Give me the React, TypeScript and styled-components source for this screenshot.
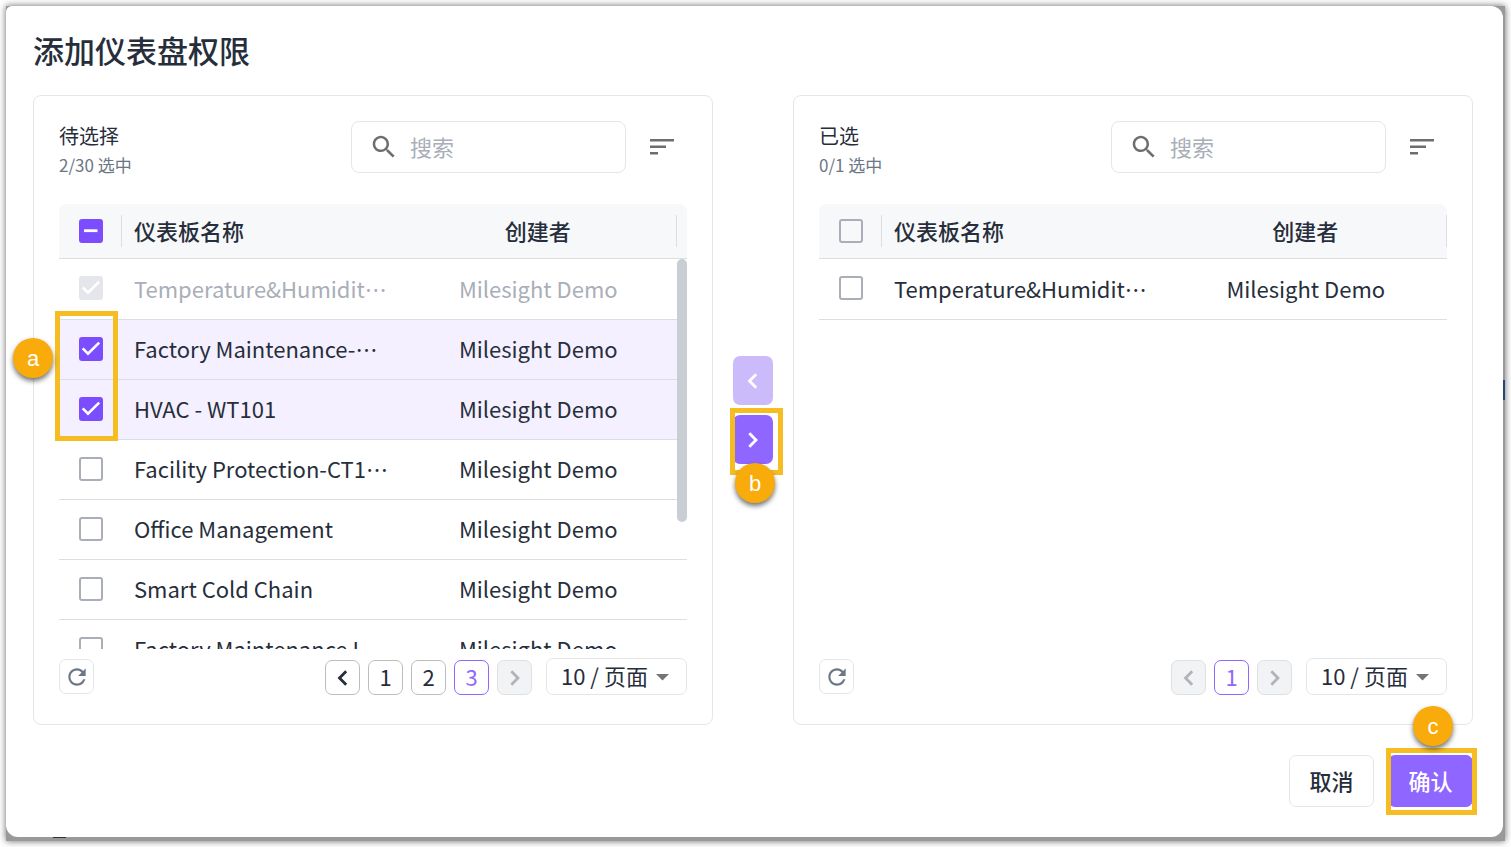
import React, { useEffect, useRef, useState } from 'react';
import styled, { createGlobalStyle } from 'styled-components';

const GlobalStyle = createGlobalStyle`
  *, *::before, *::after { box-sizing: border-box; }
  body {
    margin: 0;
    background: #fff;
    color: #272e3b;
    font-family: 'Noto Sans CJK SC', 'Noto Sans', sans-serif;
    font-size: 22px;
  }
  button, input, select { font: inherit; color: inherit; margin: 0; }
  button { cursor: pointer; padding: 0; }
  button:disabled { cursor: default; }
`;

const Page = styled.div`
  min-height: 100vh;
  padding: 6px;
  display: flex;
  flex-direction: column;
`;

const Backdrop = styled.div`
  flex: 1;
  display: flex;
  flex-direction: column;
  padding: 0 2px 4px 0;
  background:
    linear-gradient(#24467c, #24467c) no-repeat right 374px / 2px 20px,
    linear-gradient(#2c3340, #2c3340) no-repeat 47px calc(100% - 3px) / 13px 1px,
    #999;
  box-shadow: 0 0 7px rgba(0, 0, 0, 0.6);
`;

const Dialog = styled.main`
  flex: 1;
  display: flex;
  flex-direction: column;
  padding: 22px 30px 30px 27px;
  background: #fff;
  border-radius: 6px 12px 12px 12px;
`;

const Title = styled.h1`
  margin: 0 0 24px;
  font-size: 31px;
  line-height: 43px;
  font-weight: 500;
`;

const Transfer = styled.div`
  flex: 1;
  display: flex;
`;

const Panel = styled.section`
  flex: 1;
  min-width: 0;
  display: flex;
  flex-direction: column;
  padding: 25px 25px 29px;
  border: 1px solid #e5e6eb;
  border-radius: 8px;
`;

const PanelHead = styled.header`
  display: flex;
  align-items: flex-start;
  height: 52px;
  margin-bottom: 31px;
`;

const PanelInfo = styled.div`
  flex: 1;
`;

const PanelName = styled.h2`
  margin: 0;
  font-size: 20px;
  line-height: 30px;
  font-weight: 400;
`;

const PanelCount = styled.p`
  margin: 0;
  font-size: 17px;
  line-height: 28px;
  color: #6b7785;
`;

const SearchBox = styled.label`
  display: flex;
  align-items: center;
  gap: 11px;
  width: 275px;
  height: 52px;
  padding: 0 16px 0 17px;
  border: 1px solid #e5e6eb;
  border-radius: 8px;
  color: #6e6e6e;
`;

const SearchInput = styled.input`
  flex: 1;
  min-width: 0;
  border: 0;
  padding: 0 0 2px;
  outline: 0;
  background: none;
  &::placeholder { color: #a9aeb8; opacity: 1; }
`;

const SortButton = styled.button`
  width: 51px;
  height: 52px;
  margin-left: 10px;
  display: grid;
  place-items: center;
  border: 0;
  background: none;
  color: #6e6e6e;
`;

const TableArea = styled.div`
  position: relative;
  height: 445px;
`;

const TableClip = styled.div`
  height: 100%;
  overflow: hidden;
`;

const Table = styled.table`
  width: 100%;
  table-layout: fixed;
  border-collapse: separate;
  border-spacing: 0;
`;

const HeadCell = styled.th`
  height: 55px;
  padding: 0;
  background: #f7f8fa;
  border-bottom: 1px solid #dcdee0;
  font-weight: 500;
  &:first-child { border-top-left-radius: 8px; }
  &:last-child { border-top-right-radius: 8px; }
`;

const HeadInner = styled.div<{ $divider?: boolean; $center?: boolean }>`
  display: flex;
  align-items: center;
  justify-content: ${p => (p.$center ? 'center' : 'flex-start')};
  height: 32px;
  padding: 0 0 2px ${p => (p.$center ? 0 : 12)}px;
  border-right: ${p => (p.$divider ? '1px solid #dcdee0' : '0')};
`;

const CheckHead = styled(HeadInner)`
  padding: 0 0 0 20px;
`;

const Cell = styled.td<{ $center?: boolean }>`
  height: 60px;
  padding: 0 0 4px ${p => (p.$center ? 0 : 12)}px;
  border-bottom: 1px solid #dcdee0;
  text-align: ${p => (p.$center ? 'center' : 'left')};
  white-space: nowrap;
`;

const CheckCell = styled(Cell)`
  padding: 0 0 2px 20px;
`;

const Row = styled.tr<{ $selected?: boolean; $disabled?: boolean }>`
  color: ${p => (p.$disabled ? '#a9aeb8' : '#272e3b')};
  background: ${p => (p.$selected ? '#f4f0ff' : '#fff')};
  &:first-child > td { height: 61px; padding-bottom: 2px; }
`;

const ScrollThumb = styled.div`
  position: absolute;
  top: 55px;
  right: 0;
  width: 10px;
  height: 263px;
  border-radius: 5px;
  background: #c9cdd4;
`;

const CheckWrap = styled.span`
  display: grid;
  width: 24px;
  height: 24px;
  > * { grid-area: 1 / 1; }
  > svg { pointer-events: none; }
`;

const CheckInput = styled.input`
  appearance: none;
  width: 24px;
  height: 24px;
  border: 2px solid #a9aeb8;
  border-radius: 3px;
  background: transparent;
  &:checked, &:indeterminate { border-color: #7b4dff; background: #7b4dff; }
  &:disabled { border-color: #e5e6eb; background: #e5e6eb; }
`;

const PanelFoot = styled.footer`
  display: flex;
  align-items: center;
  margin-top: 9px;
  height: 37px;
`;

const SquareButton = styled.button<{ $active?: boolean }>`
  width: 35px;
  height: 35px;
  display: grid;
  place-items: center;
  line-height: 31px;
  padding-bottom: 2px;
  border: 1px solid ${p => (p.$active ? '#8f66ff' : '#bdbdbd')};
  border-radius: 7px;
  background: #fff;
  color: ${p => (p.$active ? '#8f66ff' : '#272e3b')};
  > svg { margin-top: 2px; }
  &:disabled { background: #f2f3f5; border-color: #dfe0e3; color: #b1b3b8; }
`;

const RefreshButton = styled(SquareButton)`
  margin-right: auto;
  border-color: #e5e6eb;
  color: #6b7785;
`;

const Pager = styled.nav`
  display: flex;
  gap: 8px;
  align-self: flex-end;
`;

const SizeBox = styled.div`
  display: grid;
  align-items: center;
  width: 141px;
  height: 37px;
  margin-left: 14px;
  > * { grid-area: 1 / 1; }
  > svg { justify-self: end; margin-right: 17px; pointer-events: none; }
`;

const SizeSelect = styled.select`
  appearance: none;
  width: 100%;
  height: 100%;
  padding: 0 0 3px 14px;
  border: 1px solid #e5e6eb;
  border-radius: 7px;
  background: #fff;
`;

const MoveColumn = styled.div`
  display: flex;
  flex-direction: column;
  justify-content: center;
  gap: 10px;
  padding: 0 20px;
`;

const Anchor = styled.div`
  position: relative;
`;

const MoveButton = styled.button`
  display: grid;
  place-items: center;
  width: 40px;
  height: 49px;
  border: 0;
  border-radius: 7px;
  background: #8f66ff;
  color: #fff;
  &:disabled { background: #cbbbfb; }
`;

const Actions = styled.div`
  display: flex;
  justify-content: flex-end;
  gap: 14px;
  margin-top: 30px;
`;

const ActionButton = styled.button<{ $primary?: boolean }>`
  width: 85px;
  height: 52px;
  padding-bottom: 2px;
  border: 1px solid ${p => (p.$primary ? '#8f66ff' : '#e5e6eb')};
  border-radius: 7px;
  background: ${p => (p.$primary ? '#8f66ff' : '#fff')};
  color: ${p => (p.$primary ? '#fff' : '#272e3b')};
  font-weight: 500;
`;

const Highlight = styled.div<{ $x: number; $y: number; $w: number; $h: number }>`
  position: absolute;
  left: ${p => p.$x}px;
  top: ${p => p.$y}px;
  width: ${p => p.$w}px;
  height: ${p => p.$h}px;
  border: 5px solid #f5bd22;
  pointer-events: none;
`;

const Badge = styled.div<{ $x: number; $y: number }>`
  position: absolute;
  left: ${p => p.$x}px;
  top: ${p => p.$y}px;
  width: 40px;
  height: 40px;
  border-radius: 50%;
  background: #f8ab0a;
  box-shadow: 0 3px 5px rgba(0, 0, 0, 0.55);
  color: #fff;
  font-family: 'Liberation Sans', Arial, sans-serif;
  font-size: 22px;
  line-height: 41px;
  text-align: center;
`;

function SearchIcon() {
  return (
    <svg width="30" height="30" viewBox="0 0 24 24" fill="currentColor" aria-hidden="true">
      <path d="M15.5 14h-.79l-.28-.27C15.41 12.59 16 11.11 16 9.5 16 5.91 13.09 3 9.5 3S3 5.91 3 9.5 5.91 16 9.5 16c1.61 0 3.09-.59 4.23-1.57l.27.28v.79l5 4.99L20.49 19l-4.99-5zm-6 0C7.01 14 5 11.99 5 9.5S7.01 5 9.5 5 14 7.01 14 9.5 11.99 14 9.5 14z" />
    </svg>
  );
}

function SortIcon() {
  return (
    <svg width="24" height="18" viewBox="0 0 24 18" fill="currentColor" aria-hidden="true">
      <path d="M0 1h24v2.6H0zM0 7.5h16v2.6H0zM0 14h8v2.6H0z" />
    </svg>
  );
}

function RefreshIcon() {
  return (
    <svg width="26" height="26" viewBox="0 0 24 24" fill="currentColor" aria-hidden="true">
      <path d="M17.65 6.35C16.2 4.9 14.21 4 12 4c-4.42 0-7.99 3.58-7.99 8s3.57 8 7.99 8c3.73 0 6.84-2.55 7.73-6h-2.08c-.82 2.33-3.04 4-5.65 4-3.31 0-6-2.69-6-6s2.69-6 6-6c1.66 0 3.14.69 4.22 1.78L13 11h7V4l-2.35 2.35z" />
    </svg>
  );
}

function Chevron({ dir }: { dir: 'left' | 'right' }) {
  return (
    <svg width="16" height="18" viewBox="0 0 16 18" fill="none" stroke="currentColor" strokeWidth="2.8" aria-hidden="true">
      <path d={dir === 'left' ? 'M11.2 2.2 4.5 9l6.7 6.8' : 'M4.3 2.2 11 9l-6.7 6.8'} />
    </svg>
  );
}

function Check(props: { label: string; checked?: boolean; partial?: boolean; disabled?: boolean }) {
  const [on, setOn] = useState(!!props.checked);
  const [partial, setPartial] = useState(!!props.partial);
  const ref = useRef<HTMLInputElement>(null);
  useEffect(() => {
    if (ref.current) ref.current.indeterminate = partial;
  }, [partial]);
  return (
    <CheckWrap>
      <CheckInput
        ref={ref}
        type="checkbox"
        aria-label={props.label}
        checked={on}
        disabled={props.disabled}
        onChange={e => {
          setPartial(false);
          setOn(e.target.checked);
        }}
      />
      {(on || partial) && (
        <svg width="24" height="24" viewBox="0 0 24 24" fill="none" stroke="#fff" aria-hidden="true">
          {partial ? <path d="M5 11.7h13.5" strokeWidth="2.8" /> : <path d="M3.7 11.3 9 16.6 20.2 5.6" strokeWidth="2.6" />}
        </svg>
      )}
    </CheckWrap>
  );
}

interface Item {
  name: string;
  checked?: boolean;
  disabled?: boolean;
}

interface PanelProps {
  title: string;
  count: string;
  items: Item[];
  pages: number[];
  current: number;
  partial?: boolean;
  scroll?: boolean;
  children?: React.ReactNode;
}

function ListPanel({ title, count, items, pages, current, partial, scroll, children }: PanelProps) {
  return (
    <Panel>
      <PanelHead>
        <PanelInfo>
          <PanelName>{title}</PanelName>
          <PanelCount>{count}</PanelCount>
        </PanelInfo>
        <SearchBox>
          <SearchIcon />
          <SearchInput type="text" placeholder="搜索" aria-label={`搜索${title}`} />
        </SearchBox>
        <SortButton type="button" aria-label="排序"><SortIcon /></SortButton>
      </PanelHead>
      <TableArea>
        <TableClip>
          <Table>
            <colgroup>
              <col width="63" />
              <col />
              <col />
              {scroll && <col width="10" />}
            </colgroup>
            <thead>
              <tr>
                <HeadCell><CheckHead $divider><Check label="全选" partial={partial} /></CheckHead></HeadCell>
                <HeadCell><HeadInner>仪表板名称</HeadInner></HeadCell>
                <HeadCell><HeadInner $center $divider>创建者</HeadInner></HeadCell>
                {scroll && <HeadCell />}
              </tr>
            </thead>
            <tbody>
              {items.map(item => (
                <Row key={item.name} $selected={item.checked && !item.disabled} $disabled={item.disabled}>
                  <CheckCell><Check label={item.name} checked={item.checked} disabled={item.disabled} /></CheckCell>
                  <Cell>{item.name}</Cell>
                  <Cell $center>Milesight Demo</Cell>
                  {scroll && <Cell />}
                </Row>
              ))}
            </tbody>
          </Table>
        </TableClip>
        {scroll && <ScrollThumb />}
        {children}
      </TableArea>
      <PanelFoot>
        <RefreshButton type="button" aria-label="刷新"><RefreshIcon /></RefreshButton>
        <Pager aria-label="分页">
          <SquareButton type="button" aria-label="上一页" disabled={current === 1}><Chevron dir="left" /></SquareButton>
          {pages.map(n => (
            <SquareButton type="button" key={n} $active={n === current}>{n}</SquareButton>
          ))}
          <SquareButton type="button" aria-label="下一页" disabled={current === pages.length}><Chevron dir="right" /></SquareButton>
        </Pager>
        <SizeBox>
          <SizeSelect aria-label="每页条数" defaultValue="10">
            <option value="10">10 / 页面</option>
          </SizeSelect>
          <svg width="14" height="8" viewBox="0 0 14 8" fill="#757575" aria-hidden="true"><path d="M0 1h13L6.5 7.5z" /></svg>
        </SizeBox>
      </PanelFoot>
    </Panel>
  );
}

const available: Item[] = [
  { name: 'Temperature&Humidit…', checked: true, disabled: true },
  { name: 'Factory Maintenance-…', checked: true },
  { name: 'HVAC - WT101', checked: true },
  { name: 'Facility Protection-CT1…' },
  { name: 'Office Management' },
  { name: 'Smart Cold Chain' },
  { name: 'Factory Maintenance I…' },
];

const chosen: Item[] = [{ name: 'Temperature&Humidit…' }];

export default function App() {
  return (
    <Page lang="zh-CN">
      <GlobalStyle />
      <Backdrop>
        <Dialog>
          <Title>添加仪表盘权限</Title>
          <Transfer>
            <ListPanel title="待选择" count="2/30 选中" items={available} pages={[1, 2, 3]} current={3} partial scroll>
              <Highlight $x={-4} $y={107} $w={63} $h={130} />
              <Badge $x={-46} $y={134}>a</Badge>
            </ListPanel>
            <MoveColumn>
              <MoveButton type="button" aria-label="移回" disabled><Chevron dir="left" /></MoveButton>
              <Anchor>
                <MoveButton type="button" aria-label="移入"><Chevron dir="right" /></MoveButton>
                <Highlight $x={-3} $y={-7} $w={53} $h={67} />
                <Badge $x={2} $y={48}>b</Badge>
              </Anchor>
            </MoveColumn>
            <ListPanel title="已选" count="0/1 选中" items={chosen} pages={[1]} current={1} />
          </Transfer>
          <Actions>
            <ActionButton type="button">取消</ActionButton>
            <Anchor>
              <ActionButton type="button" $primary>确认</ActionButton>
              <Highlight $x={-2} $y={-7} $w={91} $h={67} />
              <Badge $x={25} $y={-49}>c</Badge>
            </Anchor>
          </Actions>
        </Dialog>
      </Backdrop>
    </Page>
  );
}
